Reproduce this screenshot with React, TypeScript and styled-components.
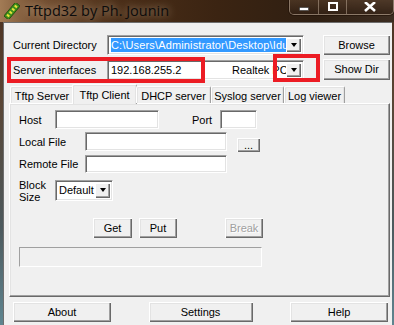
import styled, { createGlobalStyle } from 'styled-components';

const GlobalStyle = createGlobalStyle`
    html, body {
        margin: 0;
        padding: 0;
        width: 394px;
        height: 325px;
        overflow: hidden;
    }
    body {
        font-family: 'Liberation Sans', Arial, sans-serif;
        font-size: 11px;
        color: #000;
    }
`;

const Window = styled.div`
    position: relative;
    width: 394px;
    height: 325px;
    display: flex;
    flex-direction: column;
    background: linear-gradient(180deg, #4a3020 0%, #5a4534 30%, #4d5a5e 70%, #5f8590 100%);
    overflow: hidden;
`;

const TitleBar = styled.div`
    height: 22px;
    flex: none;
    display: flex;
    align-items: flex-start;
    background: linear-gradient(90deg, #a27b55 0%, #7a5536 8%, #4a2e18 30%, #3b2412 55%, #2f1f12 80%, #3c2d22 100%);
`;

const AppIcon = styled.svg`
    margin: 3px 0 0 4px;
    flex: none;
`;

const TitleText = styled.span`
    margin-left: 5px;
    line-height: 22px;
    font-family: 'Open Sans', 'Noto Sans', sans-serif;
    font-size: 14.5px;
    color: #0c0c0c;
    text-shadow: 0 0 8px rgba(255, 230, 200, 0.7);
`;

const CaptionGroup = styled.div`
    margin-left: auto;
    display: flex;
    height: 14px;
    border: 1px solid rgba(210, 190, 170, 0.55);
    border-top: none;
    border-radius: 0 0 5px 5px;
    overflow: hidden;
    box-shadow: 0 0 0 1px rgba(30, 15, 5, 0.6);
`;

const CaptionButton = styled.div<{ w: number }>`
    width: ${({ w }) => w}px;
    display: flex;
    align-items: center;
    justify-content: center;
    background: linear-gradient(180deg, rgba(90, 65, 45, 0.6), rgba(50, 32, 20, 0.7));
    & + & {
        border-left: 1px solid rgba(210, 190, 170, 0.45);
    }
`;

const Client = styled.div`
    flex: 1;
    margin: 0 2px 0 3px;
    background: #f0f0f0;
    border-top: 1px solid #6e6e6e;
    border-left: 1px solid #6e6e6e;
    display: flex;
    flex-direction: column;
    padding-top: 12px;
`;

const FieldRow = styled.div<{ top?: number }>`
    display: flex;
    align-items: center;
    margin-left: 9px;
    margin-top: ${({ top }) => top ?? 0}px;
`;

const RowLabel = styled.span<{ w: number; left?: number }>`
    width: ${({ w }) => w}px;
    margin-left: ${({ left }) => left ?? 0}px;
    flex: none;
    white-space: nowrap;
`;

const Combo = styled.div<{ w: number; h?: number }>`
    width: ${({ w }) => w}px;
    height: ${({ h }) => h ?? 20}px;
    box-sizing: border-box;
    flex: none;
    display: flex;
    align-items: stretch;
    background: #fff;
    border-top: 1px solid #a0a0a0;
    border-left: 1px solid #a0a0a0;
    border-bottom: 1px solid #fff;
    border-right: 1px solid #fff;
    box-shadow: inset 1px 1px 0 #696969, inset -1px -1px 0 #e3e3e3;
    padding: 2px;
`;

const ComboText = styled.div`
    flex: 1;
    min-width: 0;
    display: flex;
    align-items: center;
    overflow: hidden;
    white-space: nowrap;
    padding-left: 1px;
`;

const Selected = styled.span`
    flex: 1;
    min-width: 0;
    overflow: hidden;
    background: #3399ff;
    color: #fff;
    padding: 1px 0;
    letter-spacing: 0.15px;
`;

const RightText = styled.span<{ w: number }>`
    margin-left: auto;
    width: ${({ w }) => w}px;
    overflow: hidden;
    white-space: nowrap;
    flex: none;
`;

const ArrowButton = styled.div`
    width: 15px;
    flex: none;
    display: flex;
    align-items: center;
    justify-content: center;
    background: #f0f0f0;
    box-shadow: inset 1px 1px 0 #fff, inset -1px -1px 0 #696969, inset -2px -2px 0 #a0a0a0;
`;

const Arrow = styled.span`
    width: 0;
    height: 0;
    border-left: 3.5px solid transparent;
    border-right: 3.5px solid transparent;
    border-top: 4px solid #000;
`;

const Button = styled.div<{ w: number; h?: number; left?: number; disabled?: boolean; low?: boolean }>`
    width: ${({ w }) => w}px;
    height: ${({ h }) => h ?? 20}px;
    margin-left: ${({ left }) => left ?? 0}px;
    align-self: ${({ low }) => (low ? 'flex-end' : 'auto')};
    margin-bottom: ${({ low }) => (low ? -1 : 0)}px;
    box-sizing: border-box;
    flex: none;
    display: flex;
    align-items: center;
    justify-content: center;
    background: #f0f0f0;
    color: ${({ disabled }) => (disabled ? '#a0a0a0' : '#000')};
    text-shadow: ${({ disabled }) => (disabled ? '1px 1px 0 #fff' : 'none')};
    box-shadow: inset 1px 1px 0 #fff, inset -1px -1px 0 #696969, inset -2px -2px 0 #a0a0a0, inset 2px 2px 0 #e3e3e3;
    padding-bottom: 1px;
`;

const Tabs = styled.div`
    display: flex;
    align-items: flex-end;
    height: 19px;
    margin: 4px 0 0 6px;
    position: relative;
    z-index: 1;
`;

const Tab = styled.div<{ w: number; active?: boolean }>`
    width: ${({ w }) => w}px;
    height: ${({ active }) => (active ? 20 : 17)}px;
    margin: ${({ active }) => (active ? '0 -1px -1px -2px' : '0')};
    box-sizing: border-box;
    display: flex;
    align-items: center;
    justify-content: center;
    background: #f0f0f0;
    border-top: 1px solid #fff;
    border-left: 1px solid #fff;
    border-right: 1px solid #a0a0a0;
    box-shadow: inset -1px 0 0 #e3e3e3, inset 1px 1px 0 #e3e3e3;
    border-radius: 2px 2px 0 0;
    white-space: nowrap;
    padding-top: ${({ active }) => (active ? 0 : 1)}px;
`;

const Panel = styled.div`
    margin-left: 5px;
    width: 381px;
    height: 194px;
    box-sizing: border-box;
    border-top: 1px solid #fff;
    border-left: 1px solid #fff;
    border-right: 1px solid #696969;
    border-bottom: 1px solid #696969;
    box-shadow: inset -1px -1px 0 #a0a0a0, inset 1px 1px 0 #e3e3e3;
    padding-top: 6px;
    display: flex;
    flex-direction: column;
`;

const Input = styled.div<{ w: number; h?: number }>`
    width: ${({ w }) => w}px;
    height: ${({ h }) => h ?? 19}px;
    box-sizing: border-box;
    flex: none;
    background: #fff;
    border-top: 1px solid #a0a0a0;
    border-left: 1px solid #a0a0a0;
    border-bottom: 1px solid #fff;
    border-right: 1px solid #fff;
    box-shadow: inset 1px 1px 0 #696969, inset -1px -1px 0 #e3e3e3;
`;

const BlockLabel = styled.span`
    width: 36px;
    flex: none;
    line-height: 12px;
    align-self: flex-start;
    padding-top: 2px;
`;

const Progress = styled.div`
    margin: 9px 0 0 9px;
    width: 243px;
    height: 20px;
    box-sizing: border-box;
    border-top: 1px solid #a0a0a0;
    border-left: 1px solid #a0a0a0;
    border-bottom: 1px solid #fff;
    border-right: 1px solid #fff;
`;

const Footer = styled.div`
    display: flex;
    justify-content: space-between;
    padding: 5px 4px 0 9px;
`;

const Highlight = styled.div<{ x: number; y: number; w: number; h: number }>`
    position: absolute;
    left: ${({ x }) => x}px;
    top: ${({ y }) => y}px;
    width: ${({ w }) => w}px;
    height: ${({ h }) => h}px;
    box-sizing: border-box;
    border: 4px solid #ec1c24;
    pointer-events: none;
`;

const DropArrow = () => (
    <ArrowButton>
        <Arrow />
    </ArrowButton>
);

const App = () => (
    <Window>
        <GlobalStyle />
        <TitleBar>
            <AppIcon width='16' height='16' viewBox='0 0 16 16'>
                <g transform='rotate(40 8 8)'>
                    <rect x='5' y='-1' width='6' height='18' fill='#3f8f1c' stroke='#1d4a0a' strokeWidth='0.8' />
                    <rect x='6.5' y='1' width='3' height='2' fill='#e8e23a' />
                    <rect x='6.5' y='5' width='3' height='2' fill='#e8e23a' />
                    <rect x='6.5' y='9' width='3' height='2' fill='#e8e23a' />
                    <rect x='6.5' y='13' width='3' height='2' fill='#e8e23a' />
                </g>
            </AppIcon>
            <TitleText>Tftpd32 by Ph. Jounin</TitleText>
            <CaptionGroup>
                <CaptionButton w={28}>
                    <svg width='10' height='10' viewBox='0 0 10 10'>
                        <rect x='0.5' y='5.5' width='9' height='3' fill='#fff' stroke='#333' strokeWidth='0.6' />
                    </svg>
                </CaptionButton>
                <CaptionButton w={27}>
                    <svg width='10' height='10' viewBox='0 0 10 10'>
                        <rect x='1' y='1' width='8' height='7' fill='none' stroke='#fff' strokeWidth='2' />
                    </svg>
                </CaptionButton>
                <CaptionButton w={46}>
                    <svg width='14' height='10' viewBox='0 0 14 10'>
                        <path d='M2 0 L12 9 M12 0 L2 9' stroke='#fff' strokeWidth='2.6' />
                    </svg>
                </CaptionButton>
            </CaptionGroup>
        </TitleBar>
        <Client>
            <FieldRow>
                <RowLabel w={94}>Current Directory</RowLabel>
                <Combo w={197}>
                    <ComboText>
                        <Selected>C:\Users\Administrator\Desktop\Iduin</Selected>
                    </ComboText>
                    <DropArrow />
                </Combo>
                <Button w={67} left={19}>
                    Browse
                </Button>
            </FieldRow>
            <FieldRow top={4}>
                <RowLabel w={94}>Server interfaces</RowLabel>
                <Combo w={197}>
                    <ComboText>
                        <span>192.168.255.2</span>
                        <RightText w={54}>Realtek PC</RightText>
                    </ComboText>
                    <DropArrow />
                </Combo>
                <Button w={67} h={21} left={19}>
                    Show Dir
                </Button>
            </FieldRow>
            <Tabs>
                <Tab w={64}>Tftp Server</Tab>
                <Tab w={65} active>
                    Tftp Client
                </Tab>
                <Tab w={75}>DHCP server</Tab>
                <Tab w={73}>Syslog server</Tab>
                <Tab w={61}>Log viewer</Tab>
            </Tabs>
            <Panel>
                <FieldRow>
                    <RowLabel w={36}>Host</RowLabel>
                    <Input w={104} />
                    <RowLabel w={28} left={33}>
                        Port
                    </RowLabel>
                    <Input w={37} />
                </FieldRow>
                <FieldRow top={3}>
                    <RowLabel w={66}>Local File</RowLabel>
                    <Input w={142} />
                    <Button w={23} h={14} left={10} low>
                        ...
                    </Button>
                </FieldRow>
                <FieldRow top={4}>
                    <RowLabel w={66}>Remote File</RowLabel>
                    <Input w={142} h={18} />
                </FieldRow>
                <FieldRow top={4}>
                    <BlockLabel>
                        Block
                        <br />
                        Size
                    </BlockLabel>
                    <Combo w={58} h={21}>
                        <ComboText>Default</ComboText>
                        <DropArrow />
                    </Combo>
                </FieldRow>
                <FieldRow top={15}>
                    <Button w={39} left={74}>
                        Get
                    </Button>
                    <Button w={38} left={7}>
                        Put
                    </Button>
                    <Button w={38} left={48} disabled>
                        Break
                    </Button>
                </FieldRow>
                <Progress />
            </Panel>
            <Footer>
                <Button w={98}>About</Button>
                <Button w={104}>Settings</Button>
                <Button w={98}>Help</Button>
            </Footer>
        </Client>
        <Highlight x={7} y={57} w={198} h={26} />
        <Highlight x={273} y={54} w={47} h={28} />
    </Window>
);

export default App;
